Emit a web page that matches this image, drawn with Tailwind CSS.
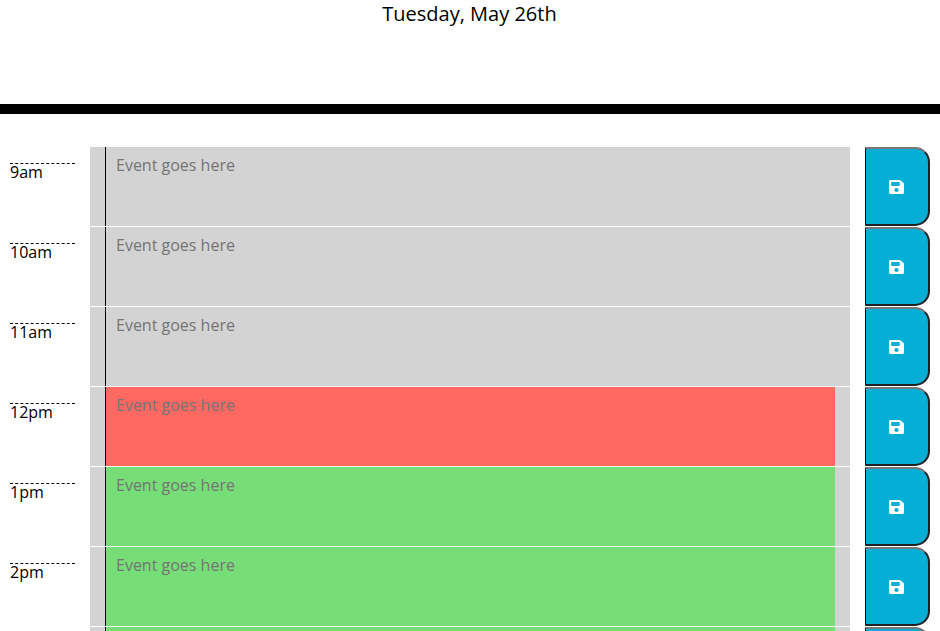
<!DOCTYPE html>
<html lang="en">
<head>
<meta charset="utf-8">
<title>Work Day Scheduler</title>
<script src="https://cdn.jsdelivr.net/npm/@tailwindcss/browser@4"></script>
</head>
<body class="flex h-[631px] flex-col overflow-hidden bg-white font-['Open_Sans',sans-serif] text-base text-black">
<header class="h-[114px] shrink-0 border-b-10 border-black text-center">
  <p class="pt-px pr-px text-[20px] leading-[26px]">Tuesday, May 26th</p>
</header>
<main id="rows" class="min-h-0 flex-1 overflow-hidden pt-[33px]"></main>
<template id="row">
  <section class="flex h-20 pr-[10px] pb-px pl-[10px]">
    <div class="mt-4 mr-[15px] h-[60px] w-[65px] shrink-0 border-t border-dashed border-black leading-[16px]"></div>
    <div class="mr-[15px] w-[760px] shrink-0 bg-[#d3d3d3] px-[15px]">
      <textarea placeholder="Event goes here" class="block h-full w-full resize-none border-l border-black px-[10px] pt-[6px] leading-6 placeholder:text-[#757575] placeholder:opacity-100"></textarea>
    </div>
    <button aria-label="Save" class="flex w-[65px] shrink-0 items-center justify-center rounded-r-[15px] border-2 border-l border-t-[#767676] border-r-[#212121] border-b-[#212121] border-l-black bg-[#06aed5] pr-px text-white">
      <svg class="h-4 w-[15px]" viewBox="0 0 448 512" preserveAspectRatio="none" fill="currentColor"><path d="M433.941 129.941l-83.882-83.882A48 48 0 0 0 316.118 32H48C21.49 32 0 53.49 0 80v352c0 26.51 21.49 48 48 48h352c26.51 0 48-21.49 48-48V163.882a48 48 0 0 0-14.059-33.941zM224 416c-35.346 0-64-28.654-64-64 0-35.346 28.654-64 64-64s64 28.654 64 64c0 35.346-28.654 64-64 64zm96-304.52V212c0 6.627-5.373 12-12 12H76c-6.627 0-12-5.373-12-12V108c0-6.627 5.373-12 12-12h228.52c3.183 0 6.235 1.264 8.485 3.515l3.48 3.48A11.996 11.996 0 0 1 320 111.48z"/></svg>
    </button>
  </section>
</template>
<script>
const past = 'bg-[#d3d3d3]', present = 'bg-[#ff6961]', future = 'bg-[#77dd77]';
const hours = [['9am', past], ['10am', past], ['11am', past], ['12pm', present], ['1pm', future], ['2pm', future], ['', future]];
for (const [label, color] of hours) {
  const row = document.getElementById('row').content.cloneNode(true);
  row.querySelector('div').textContent = label;
  row.querySelector('textarea').classList.add(color);
  document.getElementById('rows').append(row);
}
</script>
</body>
</html>
